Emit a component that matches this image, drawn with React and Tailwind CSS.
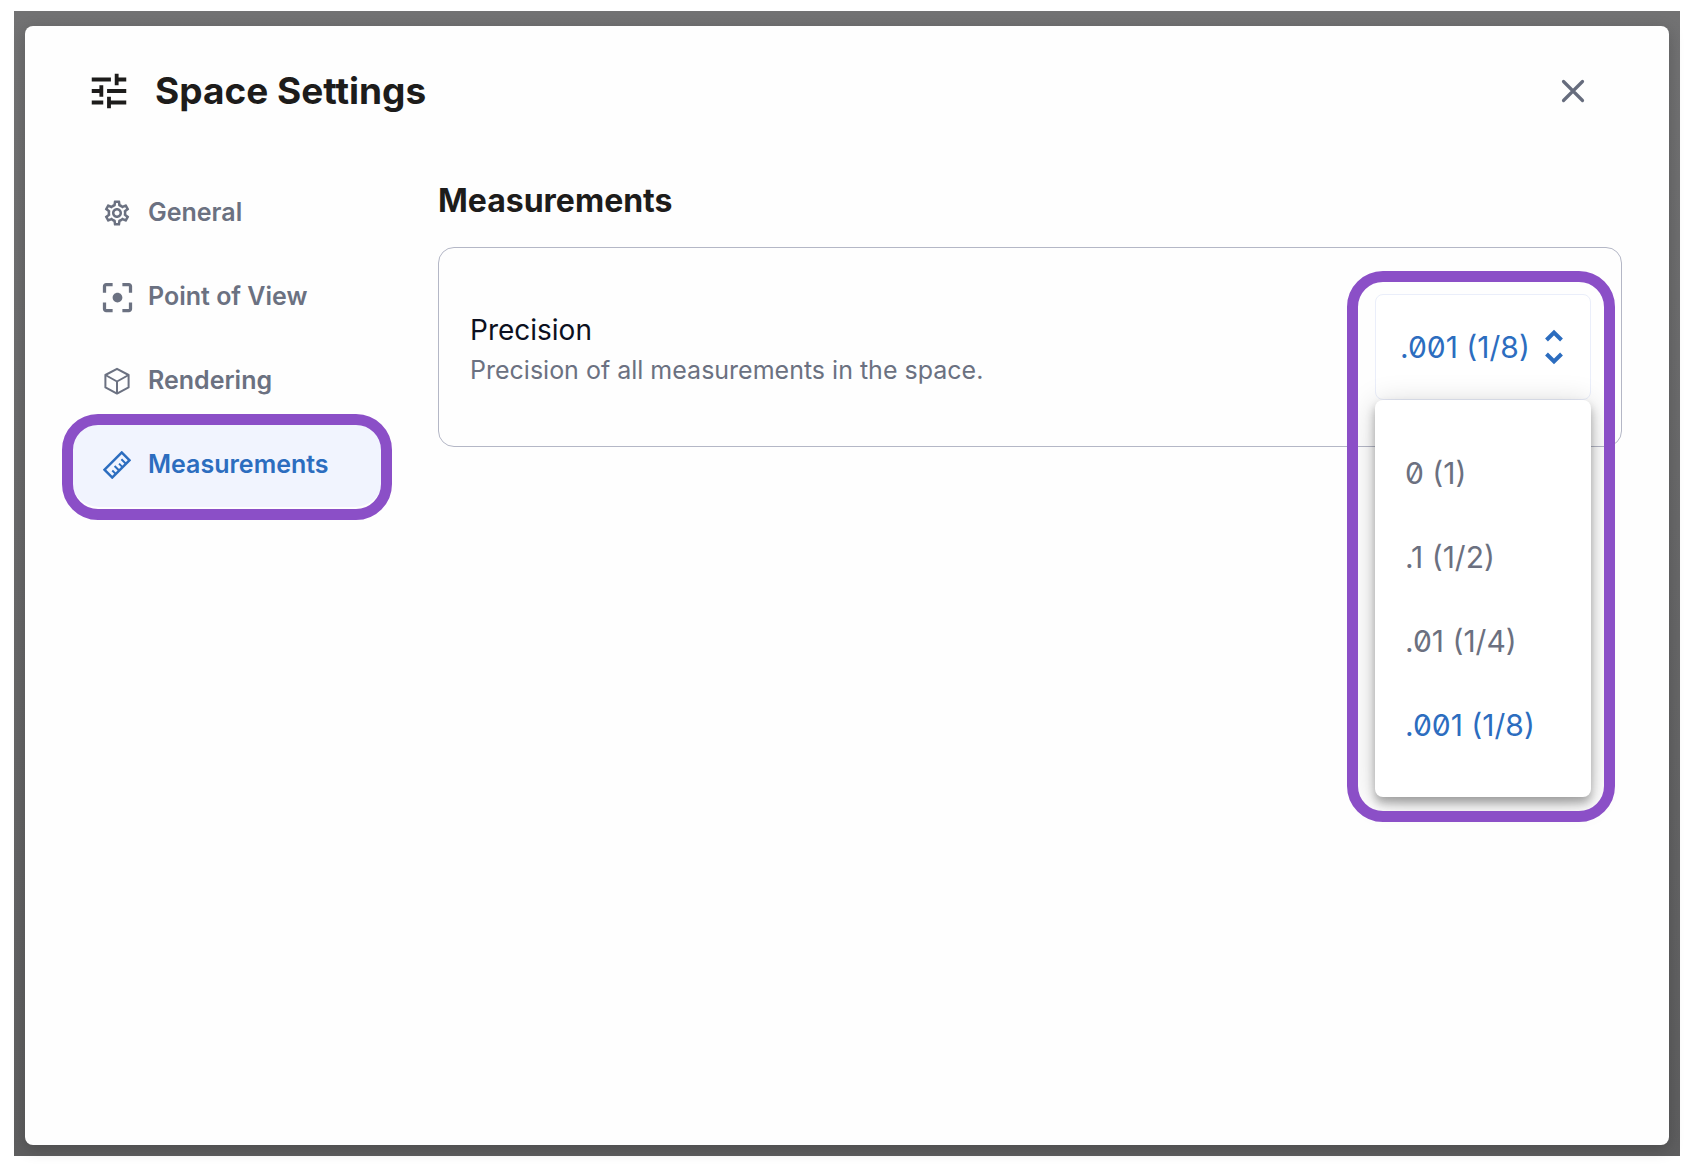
import React, { useState } from 'react';
import { MdFilterCenterFocus, MdOutlineSettings, MdTune } from 'react-icons/md';

const PRECISIONS = ['0 (1)', '.1 (1/2)', '.01 (1/4)', '.001 (1/8)'];

function CubeIcon() {
  return (
    <svg width="28" height="28" viewBox="0 0 28 28" fill="none" stroke="currentColor" strokeWidth="2" strokeLinejoin="round">
      <path d="M14 1.8 25.6 8v12.4L14 26.6 2.4 20.4V8z" />
      <path d="M2.4 8 14 14.5 25.6 8M14 14.5v12" />
    </svg>
  );
}

function RulerIcon() {
  return (
    <svg width="28" height="28" viewBox="0 0 28 28" fill="none" stroke="currentColor" strokeWidth="2.5">
      <g transform="rotate(-45 14 14)">
        <rect x="1.8" y="8.5" width="24.4" height="11" />
        <path d="M6.8 19v-4.5M11.6 19v-6M16.4 19v-4.500M21.2 19v-6" strokeWidth="2" />
      </g>
    </svg>
  );
}

const NAV = [
  { name: 'General', icon: <MdOutlineSettings size={30} /> },
  { name: 'Point of View', icon: <MdFilterCenterFocus size={39} /> },
  { name: 'Rendering', icon: <CubeIcon /> },
  { name: 'Measurements', icon: <RulerIcon /> },
];

// Purple outline that calls attention to a control
function Highlight({ className }) {
  return (
    <span
      aria-hidden="true"
      className={`pointer-events-none absolute z-20 rounded-[36px] border-[11px] border-[#8b4fc7] ${className}`}
    />
  );
}

function NavItem({ item, active, onSelect }) {
  return (
    <li className="relative">
      <button
        type="button"
        onClick={onSelect}
        className={`flex h-[84px] w-full items-center gap-[11px] rounded-[28px] pl-[26px] text-left text-[25px] font-semibold ${
          active ? 'bg-[#f1f4fe] text-[#2c6dbf]' : 'text-[#6b7181]'
        }`}
      >
        <span className="flex w-10 shrink-0 justify-center">{item.icon}</span>
        {item.name}
      </button>
      {active && <Highlight className="-inset-x-[9px] -top-[9px] -bottom-[13px]" />}
    </li>
  );
}

function PrecisionSelect() {
  const [value, setValue] = useState('.001 (1/8)');

  return (
    <div className="relative w-[216px] shrink-0 text-[30px] slashed-zero">
      <div className="relative">
        <select
          id="precision"
          value={value}
          onChange={(e) => setValue(e.target.value)}
          className="h-[106px] w-full appearance-none rounded-lg border border-[#eaeefa] bg-white pl-6 text-[#2c6dbf]"
        >
          {PRECISIONS.map((p) => (
            <option key={p}>{p}</option>
          ))}
        </select>
        <svg
          className="pointer-events-none absolute top-1/2 right-7 -translate-y-1/2 text-[#2c6dbf]"
          width="18"
          height="36"
          viewBox="0 0 18 36"
          fill="none"
          stroke="currentColor"
          strokeWidth="4"
        >
          <path d="M1.5 11 9 3.500l7.500 7.500M1.500 25 9 32.500l7.500-7.500" />
        </svg>
      </div>

      <ul
        role="listbox"
        aria-label="Precision options"
        className="absolute inset-x-0 top-full z-10 rounded-lg bg-white pt-[31px] pb-[30px] shadow-[0_6px_10px_rgba(0,0,0,0.3),0_4px_30px_rgba(0,0,0,0.18)]"
      >
        {PRECISIONS.map((p) => (
          <li key={p} role="option" aria-selected={p === value}>
            <button
              type="button"
              onClick={() => setValue(p)}
              className={`h-[84px] w-full pl-[30px] text-left ${
                p === value ? 'text-[#2c6dbf]' : 'text-[#6b7080]'
              }`}
            >
              {p}
            </button>
          </li>
        ))}
      </ul>
      <Highlight className="-top-[23px] -right-6 -bottom-[422px] -left-7" />
    </div>
  );
}

export default function App() {
  const [section, setSection] = useState('Measurements');

  return (
    <div className="flex min-h-screen bg-white pt-[11px] pr-3 pb-[14px] pl-[14px] font-['Inter','Liberation_Sans',sans-serif]">
      <div className="flex flex-1 bg-linear-to-b from-[#727273] to-[#5e5e5f] px-[11px] pt-[15px] pb-[11px]">
        <main className="flex-1 rounded-lg bg-[#fefefe] pr-[47px] pl-[37px] shadow-[0_4px_16px_rgba(0,0,0,0.2)]">
          <header className="flex h-[129px] items-center text-[#1d1c1b]">
            <MdTune size={46} className="ml-6 shrink-0" />
            <h1 className="ml-[23px] text-[37px] font-bold">Space Settings</h1>
            <button type="button" aria-label="Close" className="mr-[37px] ml-auto text-[#666c7d]">
              <svg width="24" height="24" viewBox="0 0 24 24" fill="none" stroke="currentColor" strokeWidth="3.2" strokeLinecap="round">
                <path d="M2.500 2.500l19 19M21.500 2.500l-19 19" />
              </svg>
            </button>
          </header>

          <div className="flex gap-[55px]">
            <nav className="mt-4 ml-[9px] w-[312px] shrink-0">
              <ul>
                {NAV.map((item) => (
                  <NavItem
                    key={item.name}
                    item={item}
                    active={item.name === section}
                    onSelect={() => setSection(item.name)}
                  />
                ))}
              </ul>
            </nav>

            <section className="mt-6 min-w-0 flex-1">
              <h2 className="text-[32px] leading-11 font-bold text-[#1d1c1b]">Measurements</h2>
              <div className="mt-6 flex h-[200px] items-center justify-between rounded-2xl border border-[#b4b7c6] pr-[30px] pl-[31px]">
                <div className="pt-[5px]">
                  <label htmlFor="precision" className="block text-[28px] leading-10 text-[#0c1020]">
                    Precision
                  </label>
                  <p className="text-[25px] leading-10 text-[#6b7181]">
                    Precision of all measurements in the space.
                  </p>
                </div>
                <PrecisionSelect />
              </div>
            </section>
          </div>
        </main>
      </div>
    </div>
  );
}
